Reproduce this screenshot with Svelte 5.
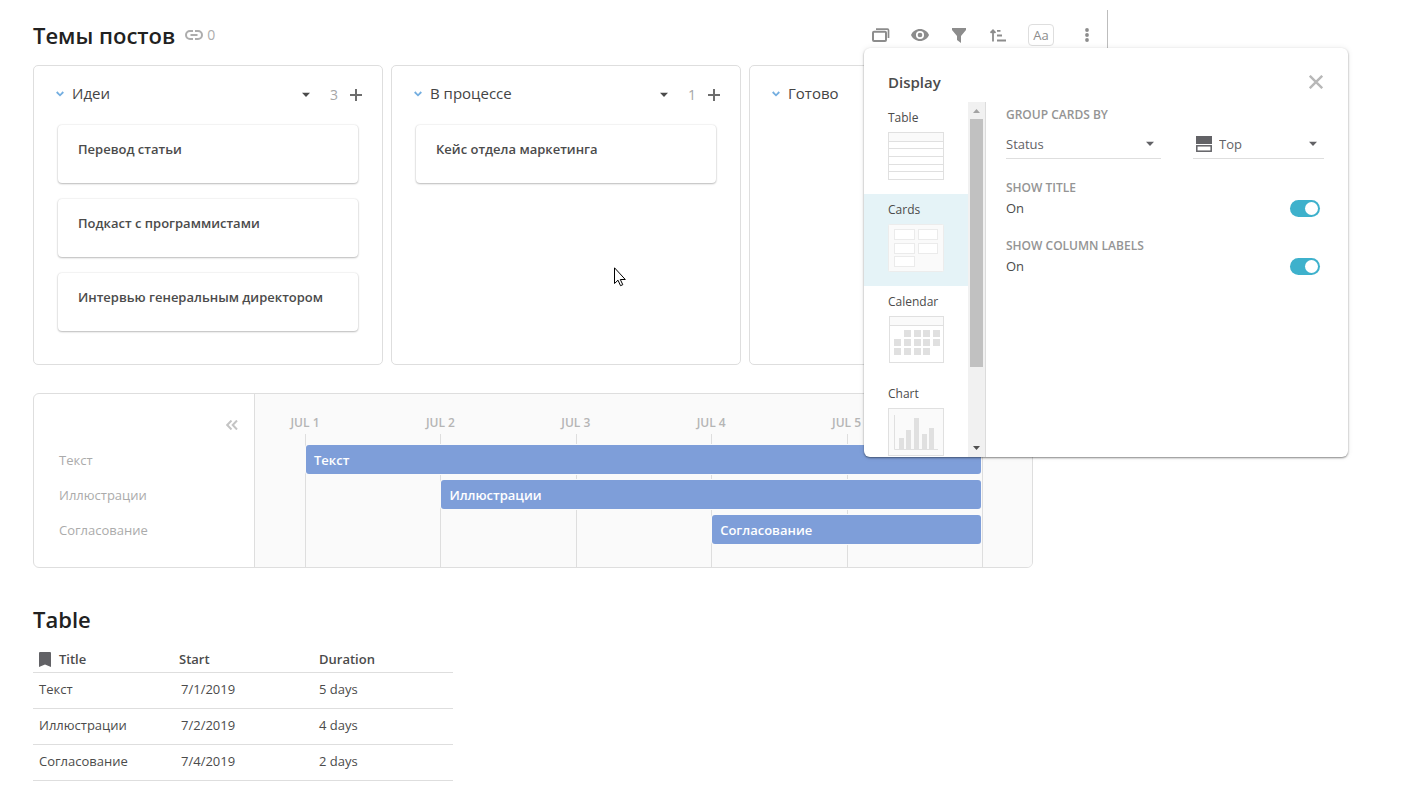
<script lang="ts">
  type Column = { title: string; cards: string[] };
  type Task = { title: string; start: string; startDay: number; days: number };

  const columns: Column[] = [
    { title: 'Идеи', cards: ['Перевод статьи', 'Подкаст с программистами', 'Интервью генеральным директором'] },
    { title: 'В процессе', cards: ['Кейс отдела маркетинга'] },
    { title: 'Готово', cards: [] }
  ];

  const tasks: Task[] = [
    { title: 'Текст', start: '7/1/2019', startDay: 1, days: 5 },
    { title: 'Иллюстрации', start: '7/2/2019', startDay: 2, days: 4 },
    { title: 'Согласование', start: '7/4/2019', startDay: 4, days: 2 }
  ];

  const days = [1, 2, 3, 4, 5];
  const views = ['Table', 'Cards', 'Calendar', 'Chart'];

  let view = $state('Cards');
  let panelOpen = $state(true);
  let showTitle = $state(true);
  let showLabels = $state(true);
</script>

{#snippet caret()}
  <svg class="caret" width="10" height="6" viewBox="0 0 10 6" aria-hidden="true">
    <path d="M1 .7h8L5 5z" fill="currentColor" />
  </svg>
{/snippet}

<main>
  <section class="board">
    <header class="board-header">
      <h1>Темы постов</h1>
      <a class="links" href="#links" aria-label="Links">
        <svg width="18" height="12" viewBox="0 0 18 12" fill="none" stroke="currentColor" stroke-width="2">
          <path d="M8 2H5a4 4 0 0 0 0 8h3M10 2h3a4 4 0 0 1 0 8h-3M5.5 6h7" />
        </svg>
        <span>0</span>
      </a>

      <div class="toolbar">
        <button class="tool" aria-label="Display" onclick={() => (panelOpen = !panelOpen)}>
          <svg width="18" height="14" viewBox="0 0 18 14" fill="none" stroke="currentColor">
            <rect x="1" y="3.8" width="13" height="9.2" rx="1" stroke-width="2" />
            <path d="M4 1.200h11.500a1 1 0 0 1 1 1V10" stroke-width="1.700" />
          </svg>
        </button>
        <button class="tool" aria-label="Visibility">
          <svg width="18" height="12" viewBox="0 0 18 12">
            <path d="M9 0C5 0 1.500 2.500 0 6c1.500 3.500 5 6 9 6s7.500-2.500 9-6c-1.500-3.500-5-6-9-6z" fill="currentColor" />
            <circle cx="9" cy="6" r="3.2" fill="none" stroke="#fff" stroke-width="1.7" />
          </svg>
        </button>
        <button class="tool" aria-label="Filter">
          <svg width="14" height="15" viewBox="0 0 14 15">
            <path d="M0 0h14v2L9 8v7l-4-3V8L0 2z" fill="currentColor" />
          </svg>
        </button>
        <button class="tool" aria-label="Sort">
          <svg width="16" height="13" viewBox="0 0 16 13" fill="none" stroke="currentColor" stroke-width="1.8">
            <path d="M3 12.500V1.500M.5 3.800L3 1.300l2.500 2.500M7 1.800h3.500M7 6.500h5M7 11.500h9" />
          </svg>
        </button>
        <button class="tool text-tool">Aa</button>
        <button class="tool" aria-label="More">
          <svg width="4" height="14" viewBox="0 0 4 14" fill="currentColor">
            <circle cx="2" cy="2" r="1.9" />
            <circle cx="2" cy="7" r="1.9" />
            <circle cx="2" cy="12" r="1.9" />
          </svg>
        </button>
      </div>
    </header>

    <div class="columns">
      {#each columns as column (column.title)}
        <article class="column">
          <header class="column-header">
            <svg class="chevron" width="8" height="6" viewBox="0 0 8 6" fill="none" aria-hidden="true">
              <path d="M.7 1L4 4.300 7.300 1" stroke="#74aee0" stroke-width="1.8" />
            </svg>
            <h2>{column.title}</h2>
            {#if column.cards.length > 0}
              <button class="column-menu" aria-label="Column menu">{@render caret()}</button>
              <span class="count">{column.cards.length}</span>
              <button class="add" aria-label="Add card">
                <svg width="12" height="12" viewBox="0 0 12 12" stroke="currentColor" stroke-width="2">
                  <path d="M6 0v12M0 6h12" />
                </svg>
              </button>
            {/if}
          </header>
          {#each column.cards as card (card)}
            <div class="card">{card}</div>
          {/each}
        </article>
      {/each}
    </div>

    {#if panelOpen}
      <aside class="panel">
        <header class="panel-header">
          <h2>Display</h2>
          <button class="close" aria-label="Close" onclick={() => (panelOpen = false)}>
            <svg width="14" height="14" viewBox="0 0 14 14" stroke="currentColor" stroke-width="2.400">
              <path d="M.8 .8l12.400 12.400M13.200 .8L.8 13.200" />
            </svg>
          </button>
        </header>

        <div class="panel-body">
          <div class="views">
            {#each views as name (name)}
              <button class="view" class:selected={view === name} onclick={() => (view = name)}>
                <span>{name}</span>
                <svg width="56" height="48" viewBox="0 0 56 48" fill="none" stroke="#e0e0e0" aria-hidden="true">
                  {#if name === 'Table'}
                    <rect x=".5" y=".5" width="55" height="47" fill="#fff" />
                    <path d="M1 1h54v8H1z" fill="#fafafa" stroke="none" />
                    <path d="M0 9.500h56M0 16.500h56M0 24.500h56M0 32.500h56M0 39.500h56" />
                  {:else if name === 'Cards'}
                    <rect x=".5" y=".5" width="55" height="47" rx="1" fill="#fafafa" stroke="#ececec" />
                    <g fill="#fff" stroke="#ebebeb">
                      <rect x="6.500" y="5.500" width="20" height="10" />
                      <rect x="30.500" y="5.500" width="19" height="10" />
                      <rect x="6.500" y="19.500" width="20" height="10" />
                      <rect x="30.500" y="19.500" width="19" height="10" />
                      <rect x="6.500" y="32.500" width="20" height="10" />
                    </g>
                  {:else if name === 'Calendar'}
                    <rect x="1.500" y=".5" width="54" height="46" fill="#fff" />
                    <path d="M2 1h53v8H2z" fill="#fafafa" stroke="none" />
                    <path d="M1 9.500h55" />
                    <g fill="#e0e0e0" stroke="none">
                      {#each [0, 1, 2] as row}
                        {#each [0, 1, 2, 3, 4] as col}
                          {#if !(row === 0 && col === 0) && !(row === 2 && col === 4)}
                            <rect x={6 + col * 10 - (col > 2 ? 1 : 0)} y={14 + row * 9} width="7" height="7" />
                          {/if}
                        {/each}
                      {/each}
                    </g>
                  {:else}
                    <rect x=".5" y=".5" width="55" height="47" fill="#fafafa" />
                    <path d="M6.500 7v34.500H50" />
                    <path d="M11 30h5v11h-5zM18 22h5v19h-5zM26 10h5v31h-5zM34 26h5v15h-5zM41 20h5v21h-5z" fill="#e0e0e0" stroke="none" />
                  {/if}
                </svg>
              </button>
            {/each}
          </div>

          <div class="scrollbar" aria-hidden="true">
            <svg width="17" height="17" viewBox="0 0 17 17"><path d="M5 11h7L8.500 7z" fill="#a3a3a3" /></svg>
            <div class="thumb"></div>
            <svg width="17" height="17" viewBox="0 0 17 17"><path d="M5 6h7l-3.500 4z" fill="#505050" /></svg>
          </div>

          <div class="settings">
            <label class="caption" for="group-by">GROUP CARDS BY</label>
            <div class="selects">
              <div class="select">
                <select id="group-by">
                  <option>Status</option>
                </select>
                {@render caret()}
              </div>
              <div class="select">
                <svg class="position-icon" width="16" height="16" viewBox="0 0 16 16" aria-hidden="true">
                  <path d="M0 0h16v8H0z" fill="#626266" />
                  <rect x=".8" y="9.800" width="14.400" height="5.400" fill="#fff" stroke="#626266" stroke-width="1.5" />
                </svg>
                <select aria-label="Position">
                  <option>Top</option>
                </select>
                {@render caret()}
              </div>
            </div>

            <label class="option">
              <span class="caption">SHOW TITLE</span>
              <span class="value">{showTitle ? 'On' : 'Off'}</span>
              <input class="switch" type="checkbox" bind:checked={showTitle} />
            </label>
            <label class="option">
              <span class="caption">SHOW COLUMN LABELS</span>
              <span class="value">{showLabels ? 'On' : 'Off'}</span>
              <input class="switch" type="checkbox" bind:checked={showLabels} />
            </label>
          </div>
        </div>
      </aside>
    {/if}
  </section>

  <section class="timeline">
    <div class="names">
      <button class="collapse" aria-label="Collapse">
        <svg width="12" height="10" viewBox="0 0 12 10" fill="none" stroke="currentColor" stroke-width="2">
          <path d="M5.500 .5L1.200 5l4.300 4.500M11 .5L6.700 5 11 9.500" />
        </svg>
      </button>
      {#each tasks as task (task.title)}
        <span class="name">{task.title}</span>
      {/each}
    </div>
    <div class="chart">
      <div class="days">
        {#each days as day (day)}
          <div class="day">
            <span class="day-label">JUL {day}</span>
            <div class="day-line"></div>
          </div>
        {/each}
      </div>
      <div class="bars">
        {#each tasks as task, i (task.title)}
          <div class="bar" style="grid-area: {i + 1} / {task.startDay} / auto / span {task.days}">{task.title}</div>
        {/each}
      </div>
    </div>
  </section>

  <section class="list">
    <h1>Table</h1>
    <table>
      <thead>
        <tr>
          <th>
            <div class="title-head">
              <svg width="12" height="15" viewBox="0 0 12 15" aria-hidden="true">
                <path d="M1 0h10a1 1 0 0 1 1 1v14l-6-2.500L0 15V1a1 1 0 0 1 1-1z" fill="#626266" />
              </svg>
              Title
            </div>
          </th>
          <th>Start</th>
          <th>Duration</th>
        </tr>
      </thead>
      <tbody>
        {#each tasks as task (task.title)}
          <tr>
            <td>{task.title}</td>
            <td class="date">{task.start}</td>
            <td>{task.days} days</td>
          </tr>
        {/each}
      </tbody>
    </table>
  </section>

  <svg class="pointer" width="12" height="20" viewBox="0 0 12 20" aria-hidden="true">
    <path d="M.5 .8v15.700l3.500-3.300 2.500 5.500 2.300-1-2.500-5.200h5z" fill="#fff" stroke="#000" />
  </svg>
</main>

<style>
  :global(body) {
    margin: 0;
    background: #fff;
  }

  main {
    position: relative;
    padding: 10px 33px 8px;
    font-family: 'Open Sans', 'Noto Sans', sans-serif;
    font-size: 13px;
    line-height: 20px;
    color: #4b4b4b;
  }

  h1,
  h2 {
    margin: 0;
  }

  h1 {
    font-size: 22px;
    line-height: 32px;
    font-weight: 600;
    color: #212121;
  }

  button,
  select {
    border: 0;
    padding: 0;
    background: none;
    font: inherit;
    color: inherit;
    cursor: pointer;
  }

  svg {
    display: block;
    flex-shrink: 0;
  }

  .board {
    position: relative;
    box-sizing: border-box;
    max-width: 1075px;
    border-right: 1px solid #bdbdbd;
  }

  .board-header {
    display: flex;
    align-items: center;
    height: 50px;
    margin-bottom: 5px;
  }

  .links {
    display: flex;
    align-items: center;
    gap: 4px;
    margin-left: 10px;
    font-size: 14px;
    color: #adadad;
    text-decoration: none;
  }

  .toolbar {
    display: flex;
    align-items: center;
    gap: 13px;
    margin-left: auto;
    padding-right: 7px;
    color: #8c8c8c;
  }

  .tool {
    display: flex;
    align-items: center;
    justify-content: center;
    width: 26px;
    height: 22px;
  }

  .text-tool {
    margin: 0 7px 0 4px;
    border: 1px solid #dedede;
    border-radius: 4px;
  }

  .columns {
    display: grid;
    grid-template-columns: repeat(3, 1fr);
    gap: 8px;
    padding-right: 8px;
  }

  .column {
    display: flex;
    flex-direction: column;
    gap: 16px;
    box-sizing: border-box;
    min-height: 300px;
    padding: 0 24px 32px;
    border: 1px solid #dedede;
    border-radius: 5px;
  }

  .column-header {
    display: flex;
    align-items: center;
    height: 43px;
    padding: 7px 0 9px;
    margin: 0 -2px -16px;
  }

  .column-header h2 {
    flex: 1;
    margin: 0 0 4px 8px;
    font-size: 15px;
    font-weight: 400;
    color: #444;
  }

  .chevron {
    margin-bottom: 2px;
  }

  .column-menu {
    padding: 4px;
  }

  .count {
    margin-left: 15px;
    font-size: 14px;
    color: #a6a6a6;
  }

  .add {
    margin: 0 -2px 0 12px;
    color: #6e6e6e;
  }

  .card {
    box-sizing: border-box;
    height: 58px;
    padding: 14px 20px;
    border-radius: 4px;
    box-shadow: 0 1px 2px rgba(0, 0, 0, 0.24), 0 0 2px rgba(0, 0, 0, 0.14);
    background: #fff;
    font-weight: 600;
    white-space: nowrap;
  }

  .panel {
    position: absolute;
    top: 38px;
    right: -241px;
    z-index: 1;
    display: flex;
    flex-direction: column;
    width: 484px;
    height: 409px;
    border-radius: 6px;
    background: #fff;
    box-shadow: 0 1px 2px rgba(0, 0, 0, 0.45), 0 0 6px rgba(0, 0, 0, 0.08);
    overflow: hidden;
  }

  .panel-header {
    display: flex;
    align-items: center;
    justify-content: space-between;
    height: 40px;
    padding: 14px 25px 0 24px;
  }

  .panel-header h2 {
    font-size: 15px;
    font-weight: 600;
    color: #4b4b4b;
  }

  .close {
    color: #b8b8b8;
  }

  .panel-body {
    display: flex;
    flex: 1;
    min-height: 0;
  }

  .views {
    width: 104px;
    overflow: hidden;
  }

  .view {
    display: block;
    box-sizing: border-box;
    width: 100%;
    height: 92px;
    padding: 6px 24px 14px;
    font-size: 12px;
    text-align: left;
  }

  .view span {
    display: block;
    height: 24px;
  }

  .selected {
    background: #e5f3f7;
  }

  .scrollbar {
    display: flex;
    flex-direction: column;
    align-items: center;
    width: 17px;
    border-right: 1px solid #dcdcdc;
    background: #f1f1f1;
  }

  .thumb {
    width: 13px;
    height: 248px;
    margin-bottom: auto;
    background: #c1c1c1;
  }

  .settings {
    flex: 1;
    padding: 3px 24px 0 20px;
  }

  .caption {
    display: block;
    font-size: 12px;
    font-weight: 600;
    color: #949494;
  }

  .selects {
    display: grid;
    grid-template-columns: 155fr 131fr;
    gap: 32px;
    margin: 8px 0 19px;
  }

  .select {
    display: flex;
    align-items: center;
    height: 21px;
    padding: 0 6px 4px 0;
    border-bottom: 1px solid #dedede;
    color: #626266;
  }

  .select select {
    flex: 1;
    min-width: 0;
    appearance: none;
    outline: 0;
  }

  .position-icon {
    margin: 0 7px 0 3px;
  }

  .option {
    display: grid;
    grid-template-columns: 1fr auto;
    align-items: center;
    margin-bottom: 18px;
  }

  .option .caption {
    grid-column: 1 / -1;
  }

  .switch {
    appearance: none;
    width: 30px;
    height: 17px;
    margin: 0 4px 0 0;
    padding: 2px;
    border-radius: 9px;
    box-sizing: border-box;
    background: #bdbdbd;
    cursor: pointer;
  }

  .switch::before {
    content: '';
    display: block;
    width: 13px;
    height: 13px;
    border-radius: 50%;
    background: #fff;
  }

  .switch:checked {
    background: #3eb1cc;
  }

  .switch:checked::before {
    margin-left: auto;
  }

  .timeline {
    display: flex;
    box-sizing: border-box;
    max-width: 1000px;
    margin-top: 28px;
    border: 1px solid #dedede;
    border-radius: 6px;
    overflow: hidden;
  }

  .names {
    display: flex;
    flex-direction: column;
    box-sizing: border-box;
    width: 221px;
    padding: 0 16px 19px 25px;
    border-right: 1px solid #dedede;
    color: #ababab;
  }

  .collapse {
    align-self: flex-end;
    height: 49px;
    padding-top: 13px;
    color: #c4c4c4;
  }

  .name {
    line-height: 35px;
  }

  .chart {
    display: grid;
    flex: 1;
    padding: 0 50px;
    background: #fafafa;
  }

  .days,
  .bars {
    display: grid;
    grid-area: 1 / 1;
    grid-template-columns: repeat(5, 1fr);
  }

  .day {
    display: flex;
    flex-direction: column;
    align-items: flex-start;
  }

  .day-label {
    padding: 19px 0 1px;
    font-size: 12px;
    font-weight: 600;
    color: #b5b5b5;
    transform: translateX(-50%);
  }

  .day-line {
    flex: 1;
    align-self: stretch;
    border-left: 1px solid #dedede;
  }

  .day:last-child .day-line {
    margin-right: -1px;
    border-right: 1px solid #dedede;
  }

  .bars {
    z-index: 0;
    align-content: start;
    row-gap: 6px;
    padding: 51px 0 22px;
  }

  .bar {
    height: 29px;
    margin: 0 1px;
    padding-left: 8px;
    border-radius: 3px;
    background: #7e9ed9;
    box-shadow: 0 0 0 1px #fafafa;
    font-weight: 600;
    line-height: 31px;
    color: #fff;
  }

  .list h1 {
    margin: 35px 0 11px;
  }

  table {
    width: 420px;
    table-layout: fixed;
    border-collapse: collapse;
  }

  th,
  td {
    padding: 0 6px;
    border-bottom: 1px solid #dedede;
    text-align: left;
  }

  th {
    height: 26px;
    font-weight: 600;
  }

  td {
    height: 32px;
    padding-bottom: 3px;
  }

  .date {
    padding-left: 8px;
  }

  .title-head {
    display: flex;
    align-items: center;
    gap: 8px;
  }

  .pointer {
    position: absolute;
    top: 267px;
    left: 614px;
  }
</style>
